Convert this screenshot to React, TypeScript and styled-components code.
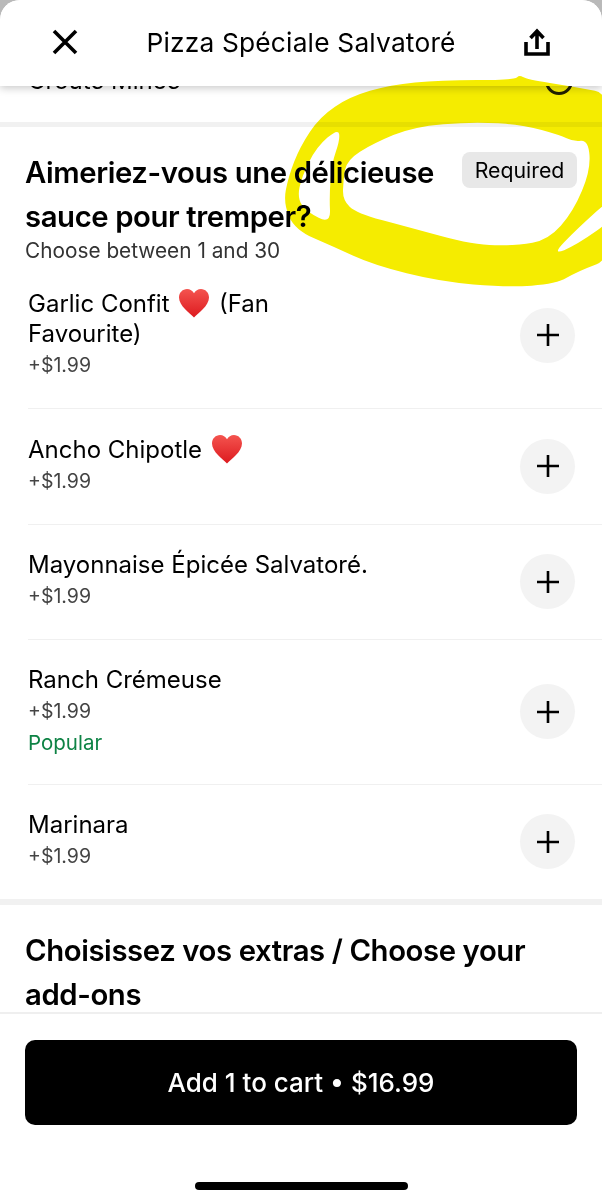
import React from "react";
import styled, { createGlobalStyle } from "styled-components";

const Global = createGlobalStyle`
  html, body { margin: 0; padding: 0; background: #fff; }
  * { box-sizing: border-box; }
`;

const Page = styled.div`
  position: relative;
  width: 602px;
  height: 1200px;
  overflow: hidden;
  background: #b9b9b9;
  font-family: Inter, "Liberation Sans", sans-serif;
  color: #000;
`;

const Sheet = styled.div`
  height: 1200px;
  display: flex;
  flex-direction: column;
  background: #fff;
  border-radius: 20px 20px 0 0;
  overflow: hidden;
`;

const Header = styled.header`
  position: relative;
  z-index: 2;
  flex: none;
  height: 86px;
  padding: 0 52px 2px;
  display: flex;
  align-items: center;
  justify-content: space-between;
  background: #fff;
  box-shadow: 0 2px 8px rgba(0, 0, 0, 0.22);
`;

const HeaderTitle = styled.h1`
  margin: 0;
  font-size: 26.3px;
  font-weight: 400;
  letter-spacing: 0.2px;
`;

const PeekRow = styled.div`
  flex: none;
  height: 56px;
  margin-top: -20px;
  padding: 0 29px 0 28px;
  display: flex;
  align-items: flex-start;
  justify-content: space-between;
`;

const PeekLabel = styled.span`
  font-size: 24px;
  line-height: 30px;
`;

const Radio = styled.span`
  width: 28px;
  height: 28px;
  margin-top: 1px;
  border: 3px solid #222;
  border-radius: 50%;
`;

const Band = styled.div<{ $h: number }>`
  flex: none;
  height: ${(p) => p.$h}px;
  background: #f1f1f1;
`;

const GroupHead = styled.section`
  flex: none;
  padding: 24px 25px 0;
`;

const HeadRow = styled.div`
  display: flex;
  align-items: flex-start;
  justify-content: space-between;
`;

const GroupTitle = styled.h2`
  margin: 0;
  font-size: 29.3px;
  line-height: 44px;
  font-weight: 600;
  letter-spacing: -0.4px;
`;

const Badge = styled.span`
  flex: none;
  width: 115px;
  height: 36px;
  margin-top: 1px;
  display: flex;
  align-items: center;
  justify-content: center;
  background: #e8e8e8;
  border-radius: 8px;
  font-size: 21.3px;
`;

const Sub = styled.div`
  font-size: 20.8px;
  line-height: 23px;
  color: #333;
`;

const List = styled.div`
  flex: none;
  padding-left: 28px;
`;

const Row = styled.div`
  min-height: 115px;
  padding: 26px 27px 26px 0;
  display: flex;
  align-items: center;
  justify-content: space-between;
  & + & {
    padding-top: 25px;
    border-top: 1px solid #f0f0f0;
  }
`;

const RowText = styled.div<{ $wide?: boolean }>`
  max-width: ${(p) => (p.$wide ? "none" : "310px")};
`;

const Name = styled.div`
  font-size: 24px;
  line-height: 30px;
`;

const Heart = styled.svg`
  width: 32px;
  height: 30px;
  vertical-align: -6px;
  margin: 0 2px;
`;

const Meta = styled.div<{ $green?: boolean }>`
  font-size: ${(p) => (p.$green ? 20.5 : 19.5)}px;
  line-height: ${(p) => (p.$green ? 30 : 33)}px;
  color: ${(p) => (p.$green ? "#0e8345" : "#444")};
`;

const Plus = styled.button`
  flex: none;
  width: 55px;
  height: 55px;
  padding: 0;
  border: 0;
  border-radius: 50%;
  background: #f3f3f3;
  color: #000;
  display: flex;
  align-items: center;
  justify-content: center;
`;

const ExtrasHead = styled(GroupHead)`
  height: 107px;
  overflow: hidden;
`;

const Footer = styled.footer`
  flex: 1;
  padding: 26px 25px 0;
  display: flex;
  flex-direction: column;
  align-items: center;
  background: #fff;
  border-top: 2px solid #efefef;
`;

const CartButton = styled.button`
  width: 552px;
  height: 85px;
  border: 0;
  border-radius: 10px;
  background: #000;
  color: #fff;
  font-family: inherit;
  font-size: 26px;
  font-weight: 500;
`;

const HomeBar = styled.div`
  width: 213px;
  height: 8px;
  margin-top: 57px;
  border-radius: 4px;
  background: #000;
`;

const Scribble = styled.svg`
  position: absolute;
  inset: 0;
  z-index: 3;
  width: 602px;
  height: 1200px;
  mix-blend-mode: multiply;
  pointer-events: none;
  filter: blur(0.7px);
`;

type Pt = [number, number];

// Closed smooth contour through the midpoints of the given points.
const contour = (pts: Pt[]) => {
  const mid = (a: Pt, b: Pt): Pt => [(a[0] + b[0]) / 2, (a[1] + b[1]) / 2];
  const n = pts.length;
  const start = mid(pts[n - 1], pts[0]);
  let d = `M${start[0]} ${start[1]}`;
  pts.forEach((p, i) => {
    const m = mid(p, pts[(i + 1) % n]);
    d += `Q${p[0]} ${p[1]} ${m[0]} ${m[1]}`;
  });
  return d + "Z";
};

// Reference crop coordinates (3x, origin at 240,70).
const OUTER: Pt[] = [
  [1130, 75], [1000, 50], [860, 28], [838, 14], [825, 30], [600, 30], [450, 45], [330, 80],
  [240, 140], [180, 230], [145, 320], [130, 400], [165, 480], [280, 530], [400, 585],
  [600, 635], [800, 652], [950, 642], [1010, 605], [1130, 560],
];
const INNER: Pt[] = [
  [1045, 210], [1052, 300], [1000, 425], [925, 510], [830, 527], [700, 525], [500, 470],
  [350, 430], [308, 390], [310, 330], [320, 270], [400, 220], [520, 170], [700, 155],
  [850, 165], [960, 195], [1000, 215],
];
const LEFT_GAP: Pt[] = [
  [295, 175], [230, 230], [185, 320], [172, 385], [200, 425], [272, 462], [268, 380],
  [275, 280], [300, 210],
];
const RIGHT_GAP: Pt[] = [
  [935, 556], [1010, 478], [1130, 370], [1130, 440], [1010, 525],
];
const SCRIBBLE = [OUTER, INNER, LEFT_GAP, RIGHT_GAP].map(contour).join("");

const HeartIcon = () => (
  <Heart viewBox="0 0 32 30" aria-hidden="true">
    <defs>
      <linearGradient id="heartFill" x1="0" y1="0" x2="0" y2="1">
        <stop offset="0" stopColor="#f4544f" />
        <stop offset="1" stopColor="#dd1a1f" />
      </linearGradient>
    </defs>
    <path
      fill="url(#heartFill)"
      d="M16 29.5C12 25 1 18 1 9.5 1 4.5 4.8 1 9 1c3 0 5.6 1.6 7 4.3C17.4 2.6 20 1 23 1c4.2 0 8 3.500 8 8.500 0 8.500-11 15.500-15 20z"
    />
  </Heart>
);

const PlusIcon = () => (
  <svg width="24" height="24" viewBox="0 0 24 24" aria-hidden="true">
    <path d="M12 1v22M1 12h22" stroke="currentColor" strokeWidth="2.6" fill="none" />
  </svg>
);

const App = () => (
  <Page>
    <Global />
    <Sheet>
      <Header>
        <svg width="26" height="26" viewBox="0 0 26 26" aria-label="Close">
          <path d="M2 2l22 22M24 2L2 24" stroke="#000" strokeWidth="3.6" fill="none" />
        </svg>
        <HeaderTitle>Pizza Spéciale Salvatoré</HeaderTitle>
        <svg width="26" height="28" viewBox="0 0 26 28" aria-label="Share">
          <path
            d="M2 14v12h22V14M13 21V4M6.5 10L13 3.200 19.500 10"
            stroke="#000"
            strokeWidth="3.6"
            fill="none"
          />
        </svg>
      </Header>
      <PeekRow>
        <PeekLabel>Croute Mince</PeekLabel>
        <Radio />
      </PeekRow>
      <Band $h={5} />
      <GroupHead>
        <HeadRow>
          <GroupTitle>
            Aimeriez-vous une délicieuse
            <br />
            sauce pour tremper?
          </GroupTitle>
          <Badge>Required</Badge>
        </HeadRow>
        <Sub>Choose between 1 and 30</Sub>
      </GroupHead>
      <List>
        <Row>
          <RowText>
            <Name>
              Garlic Confit <HeartIcon /> (Fan
              <br />
              Favourite)
            </Name>
            <Meta>+$1.99</Meta>
          </RowText>
          <Plus aria-label="Add"><PlusIcon /></Plus>
        </Row>
        <Row>
          <RowText>
            <Name>
              Ancho Chipotle <HeartIcon />
            </Name>
            <Meta>+$1.99</Meta>
          </RowText>
          <Plus aria-label="Add"><PlusIcon /></Plus>
        </Row>
        <Row>
          <RowText $wide>
            <Name>Mayonnaise Épicée Salvatoré.</Name>
            <Meta>+$1.99</Meta>
          </RowText>
          <Plus aria-label="Add"><PlusIcon /></Plus>
        </Row>
        <Row>
          <RowText>
            <Name>Ranch Crémeuse</Name>
            <Meta>+$1.99</Meta>
            <Meta $green>Popular</Meta>
          </RowText>
          <Plus aria-label="Add"><PlusIcon /></Plus>
        </Row>
        <Row>
          <RowText>
            <Name>Marinara</Name>
            <Meta>+$1.99</Meta>
          </RowText>
          <Plus aria-label="Add"><PlusIcon /></Plus>
        </Row>
      </List>
      <Band $h={6} />
      <ExtrasHead>
        <GroupTitle>
          Choisissez vos extras / Choose your
          <br />
          add-ons
        </GroupTitle>
      </ExtrasHead>
      <Footer>
        <CartButton>Add 1 to cart • $16.99</CartButton>
        <HomeBar />
      </Footer>
    </Sheet>
    <Scribble viewBox="0 0 602 1200" aria-hidden="true">
      <g transform="translate(240 70) scale(0.3333)">
        <path fill="#f5ec00" fillRule="evenodd" d={SCRIBBLE} />
      </g>
    </Scribble>
  </Page>
);

export default App;
